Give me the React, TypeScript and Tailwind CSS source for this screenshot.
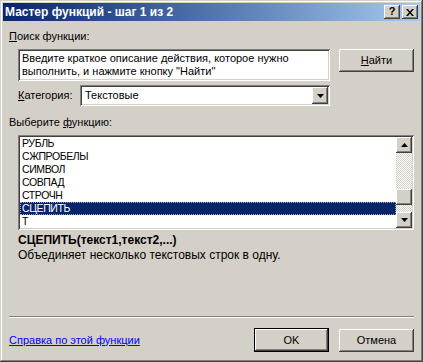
import React from "react";

const raised =
  "shadow-[inset_-1px_-1px_#404040,inset_1px_1px_#ffffff,inset_-2px_-2px_#808080,inset_2px_2px_#d4d0c8]";
const sunken =
  "shadow-[inset_1px_1px_#808080,inset_-1px_-1px_#ffffff,inset_2px_2px_#404040,inset_-2px_-2px_#d4d0c8]";

const functions = ["РУБЛЬ", "СЖПРОБЕЛЫ", "СИМВОЛ", "СОВПАД", "СТРОЧН", "СЦЕПИТЬ", "Т"];

function Arrow({ up = false }: { up?: boolean }) {
  return (
    <svg width="7" height="4" viewBox="0 0 7 4" className={up ? "rotate-180" : ""}>
      <path d="M0 0h7L3.5 4z" fill="#000" />
    </svg>
  );
}

export default function App() {
  return (
    <div
      className={`flex h-[362px] w-[423px] flex-col bg-[#d4d0c8] p-[3px] text-[11px] leading-[13px] text-black [font-family:'Liberation_Sans',Arial,sans-serif] shadow-[inset_-1px_-1px_#404040,inset_1px_1px_#d4d0c8,inset_-2px_-2px_#808080,inset_2px_2px_#ffffff]`}
    >
      {/* title bar */}
      <div className="flex h-[18px] items-center bg-gradient-to-r from-[#0a246a] to-[#a6caf0] pl-[2px] pr-[2px]">
        <span className="text-[12px] font-bold text-white">Мастер функций - шаг 1 из 2</span>
        <div className="ml-auto flex gap-[2px]">
          <div className={`flex h-[14px] w-[16px] items-center justify-center bg-[#d4d0c8] pb-[1px] text-[11px] font-bold ${raised}`}>
            ?
          </div>
          <div className={`flex h-[14px] w-[16px] items-center justify-center bg-[#d4d0c8] ${raised}`}>
            <svg width="8" height="7" viewBox="0 0 8 7">
              <path d="M0 0h2l2 2.5L6 0h2L5 3.5 8 7H6L4 4.5 2 7H0l3-3.5z" fill="#000" />
            </svg>
          </div>
        </div>
      </div>

      {/* body */}
      <div className="flex flex-1 flex-col px-[6px] pb-[7px]">
        <div className="mt-[9px] h-[13px]">
          <u>П</u>оиск функции:
        </div>

        <div className="mt-[6px] flex items-start">
          <div className={`ml-[9px] h-[32px] w-[312px] bg-white px-[4px] pt-[3px] ${sunken}`}>
            Введите краткое описание действия, которое нужно выполнить, и нажмите кнопку "Найти"
          </div>
          <div className={`ml-[9px] flex h-[23px] w-[75px] items-center justify-center ${raised}`}>
            <span>
              <u>Н</u>айти
            </span>
          </div>
        </div>

        <div className="mt-[4px] flex items-center">
          <div className="ml-[9px] w-[62px]">
            <u>К</u>атегория:
          </div>
          <div className={`flex h-[21px] w-[250px] items-center bg-white pl-[5px] pr-[2px] ${sunken}`}>
            <span>Текстовые</span>
            <div className={`ml-auto flex h-[17px] w-[16px] items-center justify-center bg-[#d4d0c8] ${raised}`}>
              <Arrow />
            </div>
          </div>
        </div>

        <div className="mt-[10px] h-[13px]">
          Выберите <u>ф</u>ункцию:
        </div>

        <div className={`ml-[9px] mt-[6px] flex h-[95px] w-[396px] bg-white p-[2px] ${sunken}`}>
          <div className="flex-1 overflow-hidden text-[10.5px] tracking-[-0.4px]">
            {functions.map((name) => (
              <div
                key={name}
                className={
                  name === "СЦЕПИТЬ"
                    ? "h-[13px] border border-dotted border-[#9aa3c8] bg-[#0a246a] pl-[1px] leading-[11px] text-white"
                    : "h-[13px] pl-[2px]"
                }
              >
                {name}
              </div>
            ))}
          </div>
          <div className="flex w-[16px] flex-col [background:repeating-conic-gradient(#d4d0c8_0_25%,#ffffff_0_50%)_0_0/2px_2px]">
            <div className={`flex h-[16px] items-center justify-center bg-[#d4d0c8] ${raised}`}>
              <Arrow up />
            </div>
            <div className="flex-1" />
            <div className={`h-[16px] bg-[#d4d0c8] ${raised}`} />
            <div className="h-[7px]" />
            <div className={`flex h-[16px] items-center justify-center bg-[#d4d0c8] ${raised}`}>
              <Arrow />
            </div>
          </div>
        </div>

        <div className="ml-[9px] mt-[4px] h-[13px] text-[12px] font-bold">СЦЕПИТЬ(текст1,текст2,...)</div>
        <div className="ml-[9px] mt-[2px] h-[13px] text-[12px]">Объединяет несколько текстовых строк в одну.</div>

        <div className="mt-auto h-[2px] border-t border-b border-t-[#808080] border-b-white" />

        <div className="mt-[10px] flex items-center">
          <span className="text-[#0000ff] underline">Справка по этой функции</span>
          <div className={`ml-auto flex h-[24px] w-[75px] items-center justify-center border border-black ${raised}`}>
            OK
          </div>
          <div className={`ml-[10px] flex h-[23px] w-[75px] items-center justify-center ${raised}`}>
            Отмена
          </div>
        </div>
      </div>
    </div>
  );
}
